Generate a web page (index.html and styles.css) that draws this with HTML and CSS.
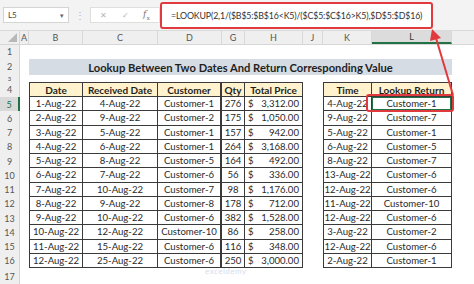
FILE: index.html
```html
<!DOCTYPE html>
<html>
<head>
<meta charset="utf-8">
<link rel="stylesheet" href="styles.css">
</head>
<body>
<div class="app">
  <div class="fbar">
    <div class="namebox"><span>L5</span><span class="caret">&#9662;</span></div>
    <div class="dots">&#8942;</div>
    <div class="icons"><span class="ic x">&#10005;</span><span class="ic ck">&#10003;</span><span class="ic fx"><i>f</i><sub>x</sub></span></div>
    <div class="formula">=LOOKUP(2,1/($B$5:$B$16&lt;K5)/($C$5:$C$16&gt;K5),$D$5:$D$16)</div>
  </div>
  <div class="sheet">
    <div class="row colhdr">
      <div class="corner"><svg width="9" height="9" viewBox="0 0 9 9"><polygon points="9,0 9,9 0,9" fill="#b8b8b8"/></svg></div>
      <div>A</div><div>B</div><div>C</div><div>D</div><div>G</div><div>H</div><div>J</div><div>K</div><div class="sel">L</div><div class="rest"></div>
    </div>
    <div class="row r1"><div class="rn">1</div></div>
    <div class="row r2"><div class="rn">2</div><div></div><div class="title">Lookup Between Two Dates And Return Corresponding Value</div></div>
    <div class="row r3"><div class="rn">3</div></div>
    <div class="row r4"><div class="rn">4</div><div></div>
      <div class="t th first">Date</div><div class="t th">Received Date</div><div class="t th thick">Customer</div><div class="t th">Qty</div><div class="t th">Total Price</div><div></div>
      <div class="t th first">Time</div><div class="t th">Lookup Return</div>
    </div>
    <div id="rows"></div>
    <div class="row r17"><div class="rn">17</div></div>
  </div>
  <div class="wm">exceldemy</div>
  <svg class="overlay" width="474" height="284" viewBox="0 0 474 284">
    <rect x="367" y="95" width="86" height="16" rx="2" fill="none" stroke="#e03a3e" stroke-width="2"/>
    <line x1="453" y1="95" x2="436" y2="38" stroke="#e03a3e" stroke-width="2"/>
    <polygon points="432,29 430,41 441,38" fill="#e03a3e"/>
  </svg>
</div>
<script src="app.js"></script>
</body>
</html>
```
FILE: app.js
```js
const data = [
  ["1-Aug-22","4-Aug-22","Customer-1","276","3,312.00","4-Aug-22","Customer-1"],
  ["2-Aug-22","9-Aug-22","Customer-2","175","1,050.00","9-Aug-22","Customer-7"],
  ["3-Aug-22","5-Aug-22","Customer-1","157","942.00","5-Aug-22","Customer-1"],
  ["4-Aug-22","6-Aug-22","Customer-1","264","3,168.00","6-Aug-22","Customer-5"],
  ["5-Aug-22","8-Aug-22","Customer-5","164","492.00","8-Aug-22","Customer-7"],
  ["6-Aug-22","7-Aug-22","Customer-6","56","336.00","13-Aug-22","Customer-6"],
  ["7-Aug-22","10-Aug-22","Customer-7","98","1,176.00","12-Aug-22","Customer-6"],
  ["8-Aug-22","9-Aug-22","Customer-8","178","712.00","11-Aug-22","Customer-10"],
  ["9-Aug-22","10-Aug-22","Customer-6","382","1,528.00","12-Aug-22","Customer-6"],
  ["10-Aug-22","12-Aug-22","Customer-10","86","258.00","3-Aug-22","Customer-2"],
  ["11-Aug-22","15-Aug-22","Customer-6","116","348.00","12-Aug-22","Customer-6"],
  ["12-Aug-22","25-Aug-22","Customer-6","250","3,000.00","2-Aug-22","Customer-1"]
];
const host = document.getElementById("rows");
data.forEach((d, i) => {
  const n = i + 5;
  const row = document.createElement("div");
  row.className = "row dr" + (n === 5 ? " active" : "");
  row.innerHTML =
    `<div class="rn">${n}</div><div></div>` +
    `<div class="t first">${d[0]}</div><div class="t">${d[1]}</div><div class="t thick">${d[2]}</div>` +
    `<div class="t">${d[3]}</div><div class="t money"><span>$</span><span>${d[4]}</span></div><div></div>` +
    `<div class="t first">${d[5]}</div><div class="t${n === 5 ? " cur" : ""}">${d[6]}</div>`;
  host.appendChild(row);
});
```
FILE: styles.css
```css
* { box-sizing: border-box; }
html, body { margin: 0; padding: 0; }
body { width: 474px; height: 284px; overflow: hidden; background: #fff; font-family: Lato, "Open Sans", sans-serif; color: #262626; }
.app { position: relative; width: 474px; height: 284px; }

.fbar { height: 31px; background: #f3f3f3; display: flex; align-items: center; padding: 0 0 0 3px; border-bottom: 1px solid #dadada; }
.namebox { width: 66px; height: 16px; background: #fff; border: 1px solid #d4d4d4; display: flex; align-items: center; justify-content: space-between; padding: 0 4px 0 4px; font-size: 8px; color: #444; }
.caret { font-size: 7px; color: #666; }
.dots { width: 21px; text-align: center; color: #b0b0b0; font-size: 10px; }
.icons { width: 70px; height: 16px; background: #fff; border: 1px solid #dedede; display: flex; align-items: center; justify-content: space-around; padding: 0 2px; }
.ic { font-size: 8px; color: #b4b4b4; }
.fx { color: #777; font-family: "DejaVu Serif", serif; font-size: 9px; }
.fx sub { font-size: 6px; }
.formula { margin-left: 0; width: 273px; height: 27px; background: #fff; border: 2px solid #e03a3e; border-radius: 3px; display: flex; align-items: center; padding-left: 9px; font-size: 8.8px; color: #333; white-space: nowrap; letter-spacing: -0.15px; }

.sheet { display: flex; flex-direction: column; }
.row { display: grid; grid-template-columns: 20px 9px 54px 75px 64px 23px 58px 20px 49px 80px 22px; }
.colhdr { height: 14px; background: #efefef; border-bottom: 1px solid #d6d6d6; }
.colhdr > div { font-size: 9px; color: #555; display: flex; align-items: center; justify-content: center; border-right: 1px solid #d8d8d8; }
.colhdr .corner { justify-content: flex-end; align-items: flex-end; padding: 0 2px 2px 0; }
.colhdr .sel { background: #dcdcdc; border-bottom: 2px solid #217346; color: #333; }
.colhdr .rest { border-right: none; }

.rn { background: #efefef; border-right: 1px solid #d6d6d6; font-size: 9px; color: #555; display: flex; align-items: center; justify-content: center; overflow: hidden; }
.r1 { height: 13px; }
.r2 { height: 17px; }
.r3 { height: 7px; }
.r3 .rn { font-size: 6px; line-height: 7px; }
.r4 { height: 15px; }
.dr { height: 14.25px; }
.r17 { height: 16px; }
.active .rn { background: #d9d9d9; color: #217346; border-right: 2px solid #217346; }

.title { grid-column: 3 / 11; background: #d6dce4; font-weight: 700; font-size: 11.2px; color: #1f1f1f; display: flex; align-items: center; justify-content: center; margin-top: 1px; }

.t { border-right: 1px solid #3a3a3a; border-bottom: 1px solid #3a3a3a; font-size: 9.6px; display: flex; align-items: center; justify-content: center; white-space: nowrap; color: #2a2a2a; }
.t.first { border-left: 1px solid #3a3a3a; }
.t.thick { border-right: 2px solid #3a3a3a; }
.th { background: #fff2cc; font-weight: 700; font-size: 10px; border-top: 1px solid #3a3a3a; color: #1f1f1f; }
.money { justify-content: space-between; padding: 0 3px 0 3px; }
.cur { box-shadow: inset 0 0 0 1px #217346; }

.wm { position: absolute; left: 205px; top: 266px; font-size: 8px; color: #9fb3d6; opacity: 0.45; letter-spacing: 0.5px; }
.overlay { position: absolute; left: 0; top: 0; pointer-events: none; }
```
